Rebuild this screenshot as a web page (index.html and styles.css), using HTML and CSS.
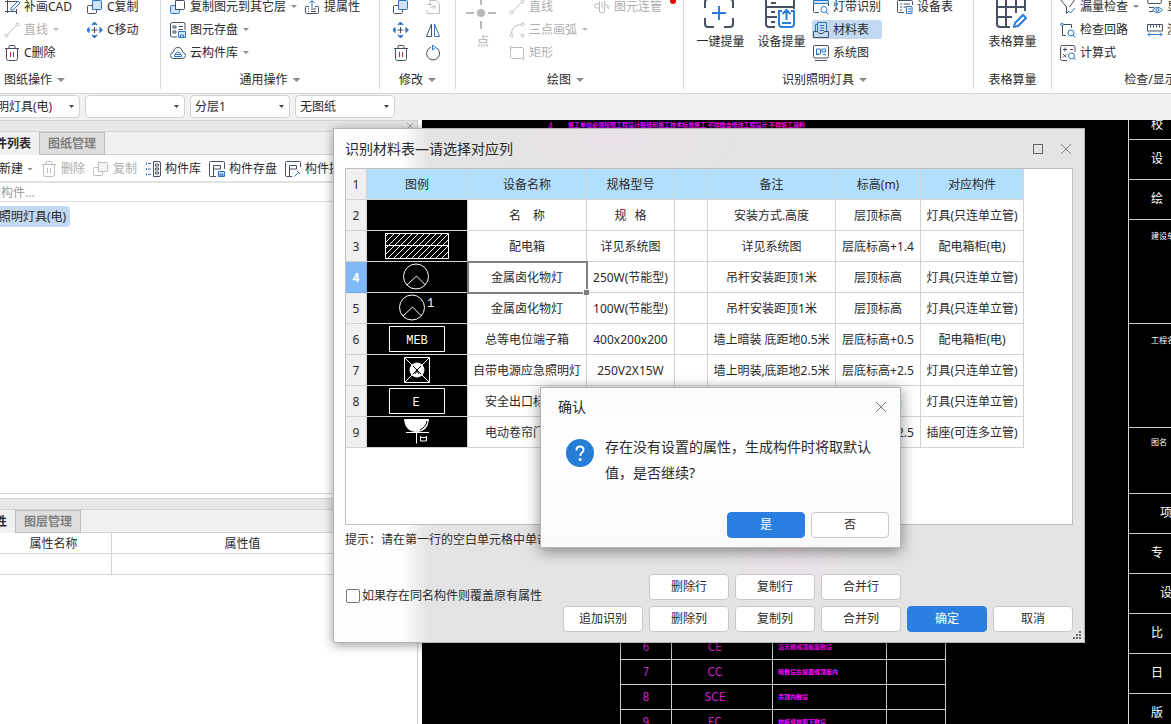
FILE: index.html
```html
<!DOCTYPE html>
<html lang="zh-CN">
<head>
<meta charset="utf-8">
<title>识别材料表</title>
<link rel="stylesheet" href="styles.css">
</head>
<body>
<svg class="defs" aria-hidden="true">
  <symbol id="i-draw" viewBox="0 0 16 16"><path class="d" d="M1 2.500h14M3.500 0v14M1 12.500h12M12.500 10v5"/><path class="b" d="M7 9l7-7 2 2-7 7H7z"/></symbol>
  <symbol id="i-line" viewBox="0 0 16 16"><path class="d" d="M3.500 12.500L12.500 3.500"/><circle class="d" cx="2.500" cy="13.500" r="1.500"/><circle class="d" cx="13.500" cy="2.500" r="1.500"/></symbol>
  <symbol id="i-trash" viewBox="0 0 16 16"><path class="d" d="M1 3.500h14M5 3.500V1.500q0-1 1-1h4q1 0 1 1v2M2.500 3.500v10q0 2 2 2h7q2 0 2-2v-10"/><path class="r" d="M6.500 7v5M9.500 7v5"/></symbol>
  <symbol id="i-copy" viewBox="0 0 16 16"><path class="bf" d="M5.500 1.500h8q1 0 1 1v7q0 1-1 1h-8z"/><path class="d" d="M5.500 6.500h-4q-1 0-1 1v6q0 1 1 1h7q1 0 1-1v-3"/></symbol>
  <symbol id="i-layers" viewBox="0 0 16 16"><path class="bf" d="M5.500 6.500h-4q-1 0-1 1v6q0 1 1 1h7q1 0 1-1v-3h-4z"/><path class="d" d="M5.500 1.500h8q1 0 1 1v7q0 1-1 1h-8z"/></symbol>
  <symbol id="i-move" viewBox="0 0 16 16"><path class="d" d="M7.500 5v6M4.500 8h6"/><path class="b" stroke-width="1.400" d="M5 3L7.500.500 10 3M5 13l2.500 2.500L10 13M2.500 5.500L0 8l2.500 2.500M12.500 5.500L15 8l-2.500 2.500M7.500 1v2M7.500 13v2M1 8h2M12 8h2"/></symbol>
  <symbol id="i-save" viewBox="0 0 16 16"><path class="d" d="M15 8V2q0-1.500-1.500-1.500h-11Q.5.500.5 2v11q0 2 2 2H7M3 4h3v2H3zM3 9h3v2H3zM8.500 4.500H13M8.500 7.500H13"/><path class="bf" d="M8.500 9.500h7v6h-7z"/><path class="b" d="M10.500 13h3v2.500h-3z"/></symbol>
  <symbol id="i-cloud" viewBox="0 0 16 16"><path class="d" d="M4 13.500Q.5 13.500.5 10.500T3.500 7Q4 2.500 8 2.500T12.500 7q3 .5 3 3.500t-3.500 3z"/><path class="b" d="M4.500 11.500q-.5-2 1-2.500Q6 7 8 7t2.500 2q1.500.5 1 2.500zM5 9.500h6"/></symbol>
  <symbol id="i-attr" viewBox="0 0 16 16"><path class="d" d="M5 7.500H2.500q-1 0-1 1v5q0 1 1 1h11q1 0 1-1v-5q0-1-1-1H11M4 10h1M7 10h5M4 12.500h1M7 12.500h5"/><path class="b" d="M8 9V2M5.500 4L8 1.500 10.500 4"/></symbol>
  <symbol id="i-paste" viewBox="0 0 16 16"><path class="d" d="M5 5V1.500h6L14.500 5v9.500h-4M2 5.500h5M2 14.500V11M5 8h5M8 5.500L10.500 8 8 10.500M2.500 14.500h7"/></symbol>
  <symbol id="i-mirror" viewBox="0 0 16 16"><path class="d" d="M6.500 2v12.500h-5z"/><path class="b" d="M9.500 2v12.500h5z"/></symbol>
  <symbol id="i-rotate" viewBox="0 0 16 16"><path class="d" d="M10.500 2.400A6.500 6.500 0 1 1 6 2.300"/><path class="b" d="M7.500 0l3 2.500-3 2.500z"/></symbol>
  <symbol id="i-arc" viewBox="0 0 16 16"><path class="d" d="M2.500 12Q2.500 3.500 12 2.500"/><circle class="d" cx="2.500" cy="13.500" r="1.500"/><circle class="d" cx="13.500" cy="2.500" r="1.500"/><circle class="d" cx="13.500" cy="13.500" r="1.500"/></symbol>
  <symbol id="i-rect" viewBox="0 0 16 16"><path class="d" d="M1.500 3.500v9q0 1 1 1H12M14.500 12V4q0-1.500-1.500-1.500H3"/><circle class="d" cx="2" cy="2.500" r="1"/><circle class="d" cx="14" cy="13.500" r="1"/></symbol>
  <symbol id="i-pipe" viewBox="0 0 16 16"><path class="d" d="M5.500 2v11q2.500 2 5 0V2M5.500 5H2.500q-2 0-2 2t2 2h3M10.500 6h2q2 0 2 2M12.500 7.500l2 2 1.500-2M8 3v6"/></symbol>
  <symbol id="i-strip" viewBox="0 0 16 16"><path class="d" d="M.5 12.500v-9M15.500 3.500V7M.5 12.500q0 1 1 1H6"/><path class="bf" d="M.5 1.500h15v3H.500z"/><circle class="b" cx="11" cy="10.500" r="3"/><path class="b" d="M13 13l2.500 2.500"/></symbol>
  <symbol id="i-mat" viewBox="0 0 16 16"><path class="b" d="M4.500 10V.500h9V10M7 3.500h4M7 6h4M7 8.500h4"/><path class="b" d="M4.500 2.500h-2V10"/><path class="d" d="M.5 9.500h4l1.500 2h4l1.500-2h4v6H.500z"/></symbol>
  <symbol id="i-sys" viewBox="0 0 16 16"><path class="d" d="M2 .500h12q1.500 0 1.500 1.500v9.500q0 1.500-1.500 1.500H2Q.5 13 .5 11.500V2Q.5.500 2 .500zM2 15.500h12"/><path class="b" d="M3.500 4h4v5h-4zM9 4h3.500v3H9zM10 9.500h3M3 9.500h3"/></symbol>
  <symbol id="i-list" viewBox="0 0 16 16"><path class="d" d="M15.500 6V2.500q0-1-1-1h-13q-1 0-1 1v10q0 1 1 1H7M3 5h2M6.500 5H13M3 8h2M6.500 8H9M3 11h2"/><path class="b" d="M9.500 7.500h5.500v7H9.500zM11 10h3M11 12.500h3"/></symbol>
  <symbol id="i-leak" viewBox="0 0 16 16"><path class="d" d="M1 1l5.500 7v6.500L9 12M14.500 1l-5 7"/><path class="b" d="M8 11.500l2.500 2.500 4.500-5"/></symbol>
  <symbol id="i-loop" viewBox="0 0 16 16"><path class="d" d="M2.500 3v10.500H6M2.500 2.500h9V6"/><circle class="bf" cx="2" cy="2.500" r="1.300"/><circle class="b" cx="11" cy="11" r="3"/><path class="b" d="M13 13l2.500 2.500"/></symbol>
  <symbol id="i-calc" viewBox="0 0 16 16"><path class="d" d="M7 15.500H2.500q-2 0-2-2V2.500q0-2 2-2h10.500q2 0 2 2V7M3 4.500h4M5 2.500v4M10 4.500h3M3 9l3.500 3.500M6.500 9L3 12.500"/><circle class="b" cx="11.500" cy="11" r="3"/><path class="b" d="M13.500 13l2 2"/></symbol>
  <symbol id="i-show" viewBox="0 0 16 16"><path class="d" d="M2 .500h11q1.500 0 1.500 2T13 4.500H2Q.5 4.500.5 2.500T2 .500zM7 8.500H2M6 12.500H2"/><path class="b" d="M5.500 11q5-5.500 10 0-5 5.500-10 0z"/><circle class="b" cx="10.500" cy="11" r="1.500"/></symbol>
  <symbol id="i-ruler" viewBox="0 0 16 16"><path class="d" d="M.5 2.500h15V9H.500zM3.500 2.500v3M6.500 2.500v3M9.500 2.500v3M12.500 2.500v3"/><path class="b" d="M1 12.500h14M3 10.500l-2 2 2 2M13 10.500l2 2-2 2"/></symbol>
  <symbol id="i-lib" viewBox="0 0 16 16"><path class="b" d="M3 2.500h3M3 8h3M3 13.500h3M1.500 1.500v2M1.500 7v2M1.500 12.500v2"/><path class="d" d="M8.500 .500h5.500q1.500 0 1.500 1.500v12q0 1.500-1.500 1.500H8.500zM10.500 3h3v2h-3zM10.500 7h3v2h-3zM10.500 11h3v2h-3z"/></symbol>
  <symbol id="i-cstore" viewBox="0 0 16 16"><path class="d" d="M15.500 8V1.500q0-1-1-1h-13q-1 0-1 1v13q0 1 1 1H7M4.500 15V4.500h7V8h-7"/><path class="bf" d="M9.500 10.500h6v5h-6z"/><path class="b" d="M11 13h3v2h-3z"/></symbol>
  <symbol id="i-cpick" viewBox="0 0 16 16"><path class="d" d="M15.500 6V1.500q0-1-1-1h-13q-1 0-1 1v13q0 1 1 1H7M4.500 15V4.500h7V8h-7M12 10l3 3"/><path class="b" d="M9.500 15.500l4-4"/></symbol>
  <symbol id="i-x" viewBox="0 0 12 12"><path d="M1 1l10 10M11 1L1 11"/></symbol>
</svg>

<header class="ribbon">
  <section class="group g-paper">
    <div class="tools">
      <div class="col">
        <button class="cmd"><svg><use href="#i-draw"/></svg>补画CAD</button>
        <button class="cmd off" disabled><svg><use href="#i-line"/></svg>直线<i class="caret"></i></button>
        <button class="cmd"><svg><use href="#i-trash"/></svg>C删除</button>
      </div>
      <div class="col">
        <button class="cmd"><svg><use href="#i-copy"/></svg>C复制</button>
        <button class="cmd"><svg><use href="#i-move"/></svg>C移动</button>
      </div>
    </div>
    <h2 class="cap">图纸操作<i class="caret wide"></i></h2>
  </section>
  <section class="group g-common">
    <div class="tools">
      <div class="col">
        <button class="cmd"><svg><use href="#i-layers"/></svg>复制图元到其它层<i class="caret"></i></button>
        <button class="cmd"><svg><use href="#i-save"/></svg>图元存盘<i class="caret"></i></button>
        <button class="cmd"><svg><use href="#i-cloud"/></svg>云构件库<i class="caret"></i></button>
      </div>
      <div class="col">
        <button class="cmd"><svg><use href="#i-attr"/></svg>提属性</button>
      </div>
    </div>
    <h2 class="cap">通用操作<i class="caret wide"></i></h2>
  </section>
  <section class="group g-edit">
    <div class="tools">
      <div class="col">
        <button class="cmd" aria-label="复制"><svg><use href="#i-copy"/></svg></button>
        <button class="cmd" aria-label="移动"><svg><use href="#i-move"/></svg></button>
        <button class="cmd" aria-label="删除"><svg><use href="#i-trash"/></svg></button>
      </div>
      <div class="col">
        <button class="cmd off" disabled aria-label="延伸"><svg><use href="#i-paste"/></svg></button>
        <button class="cmd" aria-label="镜像"><svg><use href="#i-mirror"/></svg></button>
        <button class="cmd" aria-label="旋转"><svg><use href="#i-rotate"/></svg></button>
      </div>
    </div>
    <h2 class="cap">修改<i class="caret wide"></i></h2>
  </section>
  <section class="group g-draw">
    <div class="tools">
      <button class="big off" disabled>
        <svg viewBox="0 0 32 32"><path d="M16 0v8M16 24v8M1 16h8M23 16h8" fill="none" stroke="#b8b8b8" stroke-width="2"/><circle cx="16" cy="16" r="4" fill="#b8b8b8"/></svg>点</button>
      <div class="col">
        <button class="cmd off" disabled><svg><use href="#i-line"/></svg>直线</button>
        <button class="cmd off" disabled><svg><use href="#i-arc"/></svg>三点画弧<i class="caret"></i></button>
        <button class="cmd off" disabled><svg><use href="#i-rect"/></svg>矩形</button>
      </div>
      <div class="col">
        <button class="cmd off marked" disabled><svg><use href="#i-pipe"/></svg>图元连管</button>
      </div>
    </div>
    <h2 class="cap">绘图<i class="caret wide"></i></h2>
  </section>
  <section class="group g-light">
    <div class="tools">
      <button class="big">
        <svg viewBox="0 0 32 32" fill="none" stroke-width="2"><path d="M2 11V5q0-3 3-3h6M21 2h6q3 0 3 3v6M30 21v6q0 3-3 3h-6M11 30H5q-3 0-3-3v-6" stroke="#475062"/><path d="M16 9v14M9 16h14" stroke="#2b7de0"/></svg>一键提量</button>
      <button class="big">
        <svg viewBox="0 0 32 32" fill="none" stroke-width="2"><path d="M11 30H5q-3 0-3-3V2h28v10M2 10h28M2 20h11M7 6h5M7 15h4M7 25h4" stroke="#475062"/><path d="M18 14h-3v13q0 3 3 3h9q3 0 3-3V14h-3M22.500 23V13M18.500 17l4-4 4 4M18 26h9" stroke="#2b7de0"/></svg>设备提量</button>
      <div class="col">
        <button class="cmd"><svg><use href="#i-strip"/></svg>灯带识别</button>
        <button class="cmd on"><svg><use href="#i-mat"/></svg>材料表</button>
        <button class="cmd"><svg><use href="#i-sys"/></svg>系统图</button>
      </div>
      <div class="col">
        <button class="cmd"><svg><use href="#i-list"/></svg>设备表</button>
      </div>
    </div>
    <h2 class="cap">识别照明灯具<i class="caret wide"></i></h2>
  </section>
  <section class="group g-sheet">
    <div class="tools">
      <button class="big">
        <svg viewBox="0 0 32 32" fill="none" stroke-width="2"><path d="M30 14V4q0-3-3-3H5Q2 1 2 4v23q0 3 3 3h10M2 10h28M2 20h15M11 1v29M21 1v15" stroke="#475062"/><path d="M19 30l1-4 8-8 3 3-8 8z" stroke="#2b7de0"/></svg>表格算量</button>
    </div>
    <h2 class="cap">表格算量</h2>
  </section>
  <section class="group g-check">
    <div class="tools">
      <div class="col">
        <button class="cmd"><svg><use href="#i-leak"/></svg>漏量检查<i class="caret"></i></button>
        <button class="cmd"><svg><use href="#i-loop"/></svg>检查回路</button>
        <button class="cmd"><svg><use href="#i-calc"/></svg>计算式</button>
      </div>
      <div class="col">
        <button class="cmd"><svg><use href="#i-show"/></svg>显示</button>
        <button class="cmd"><svg><use href="#i-ruler"/></svg>测量</button>
      </div>
    </div>
    <h2 class="cap">检查/显示<i class="caret wide"></i></h2>
  </section>
</header>

<nav class="combos">
  <span class="combo"><select aria-label="构件类型"><option>照明灯具(电)</option></select></span>
  <span class="combo"><select aria-label="构件"><option></option></select></span>
  <span class="combo"><select aria-label="分层"><option>分层1</option></select></span>
  <span class="combo"><select aria-label="图纸"><option>无图纸</option></select></span>
</nav>

<main class="work">
  <aside class="side">
    <div class="grip"><button class="shut" aria-label="关闭"><svg><use href="#i-x"/></svg></button></div>
    <div class="tabs"><button class="tab cur">构件列表</button><button class="tab">图纸管理</button></div>
    <div class="bar">
      <button class="tool">新建<i class="caret"></i></button>
      <button class="tool off" disabled><svg><use href="#i-trash"/></svg>删除</button>
      <button class="tool off" disabled><svg><use href="#i-copy"/></svg>复制</button>
      <button class="tool"><svg><use href="#i-lib"/></svg>构件库</button>
      <button class="tool"><svg><use href="#i-cstore"/></svg>构件存盘</button>
      <button class="tool"><svg><use href="#i-cpick"/></svg>构件提取</button>
    </div>
    <input class="search" type="text" aria-label="搜索构件" placeholder="搜索构件...">
    <div class="tree"><button class="node">照明灯具(电)</button></div>
    <div class="grip low"></div>
    <div class="tabs"><button class="tab cur">属性</button><button class="tab">图层管理</button></div>
    <div class="propbox">
      <table class="props">
        <thead><tr><th class="p-name">属性名称</th><th class="p-val">属性值</th></tr></thead>
        <tbody><tr><td></td><td></td></tr></tbody>
      </table>
    </div>
  </aside>
  <section class="cad">
    <p class="note"><span>4、</span><b>施工单位必须按照工程设计图纸和施工技术标准施工 不得擅自修改工程设计 不得偷工减料</b></p>
    <table class="codes">
      <tr><td class="c1">6</td><td class="c2">CE</td><td class="c3">沿天棚或顶板面敷设</td><td class="c4"></td></tr>
      <tr><td>7</td><td>CC</td><td class="c3">暗敷设在屋面或顶板内</td><td></td></tr>
      <tr><td>8</td><td>SCE</td><td class="c3">吊顶内敷设</td><td></td></tr>
      <tr><td>9</td><td>FC</td><td class="c3">地板或地面下敷设</td><td></td></tr>
    </table>
    <div class="stamp">
      <div class="s-top">校</div>
      <div>设</div>
      <div>绘</div>
      <div class="s-tall">建设单位</div>
      <div class="s-tall">工程名称</div>
      <div class="s-mid">图名</div>
      <div class="far">项</div>
      <div>专</div>
      <div class="far">设</div>
      <div>比</div>
      <div>日</div>
      <div>版</div>
    </div>
  </section>
</main>

<section class="dialog" role="dialog" aria-labelledby="dlg-title">
  <header class="dlg-head">
    <h1 id="dlg-title">识别材料表—请选择对应列</h1>
    <button class="maxi" aria-label="最大化"></button>
    <button class="shut" aria-label="关闭"><svg><use href="#i-x"/></svg></button>
  </header>
  <div class="sheet">
    <table class="mat">
      <colgroup><col class="k0"><col class="k1"><col class="k2"><col class="k3"><col class="k4"><col class="k5"><col class="k6"><col class="k7"></colgroup>
      <thead>
        <tr><th class="no">1</th><th>图例</th><th>设备名称</th><th>规格型号</th><th></th><th>备注</th><th>标高(m)</th><th>对应构件</th></tr>
      </thead>
      <tbody>
        <tr><th class="no">2</th><td class="lg"></td><td>名&emsp;称</td><td>规&ensp;&thinsp;格</td><td></td><td>安装方式.高度</td><td>层顶标高</td><td>灯具(只连单立管)</td></tr>
        <tr><th class="no">3</th><td class="lg"><svg viewBox="0 0 100 30"><defs><pattern id="hatch" width="6" height="6" patternUnits="userSpaceOnUse"><path d="M-1 7L7-1M-1 1l2-2M5 7l2-2" stroke="#fff"/></pattern></defs><path d="M18.500 2.500h63v25h-63z" fill="url(#hatch)"/><path d="M18.500 2.500h63v25h-63zM18.500 14.500h63"/></svg></td><td>配电箱</td><td>详见系统图</td><td></td><td>详见系统图</td><td>层底标高+1.4</td><td>配电箱柜(电)</td></tr>
        <tr><th class="no sel">4</th><td class="lg"><svg viewBox="0 0 100 30"><circle cx="49" cy="14.500" r="12.500"/><path d="M40 23l9.500-9 9 9"/></svg></td><td class="active">金属卤化物灯</td><td>250W(节能型)</td><td></td><td>吊杆安装距顶1米</td><td>层顶标高</td><td>灯具(只连单立管)</td></tr>
        <tr><th class="no">5</th><td class="lg"><svg viewBox="0 0 100 30"><circle cx="45" cy="14.500" r="12.500"/><path d="M36 23l9.500-9 9 9"/><text x="60" y="14">1</text></svg></td><td>金属卤化物灯</td><td>100W(节能型)</td><td></td><td>吊杆安装距顶1米</td><td>层顶标高</td><td>灯具(只连单立管)</td></tr>
        <tr><th class="no">6</th><td class="lg"><svg viewBox="0 0 100 30"><path d="M22.500 2.500h55v25h-55z"/><text x="50" y="20" text-anchor="middle">MEB</text></svg></td><td>总等电位端子箱</td><td>400x200x200</td><td></td><td>墙上暗装 底距地0.5米</td><td>层底标高+0.5</td><td>配电箱柜(电)</td></tr>
        <tr><th class="no">7</th><td class="lg"><svg viewBox="0 0 100 30"><path d="M37.500 2.500h25v25h-25zM38 3l24 24M62 3L38 27"/><circle cx="50" cy="15" r="7" fill="#fff"/><path d="M46 11l8 8M54 11l-8 8M48 19l2-3 2 3" stroke="#000"/></svg></td><td>自带电源应急照明灯</td><td>250V2X15W</td><td></td><td>墙上明装,底距地2.5米</td><td>层底标高+2.5</td><td>灯具(只连单立管)</td></tr>
        <tr><th class="no">8</th><td class="lg"><svg viewBox="0 0 100 30"><path d="M22.500 2.500h55v25h-55z"/><text x="49" y="20" text-anchor="middle">E</text></svg></td><td>安全出口标志灯</td><td></td><td></td><td></td><td>层顶标高</td><td>灯具(只连单立管)</td></tr>
        <tr><th class="no">9</th><td class="lg"><svg viewBox="0 0 100 30"><path d="M37.500 2.500h24q-1 12-12 12t-12-12z" fill="#fff"/><path d="M39 15.500h23M49.500 15.500v11M53.500 19v5h6v-5M53 20.500h7"/><path d="M53 13q6-3 7-9" stroke="#000"/></svg></td><td>电动卷帘门插座</td><td></td><td></td><td></td><td>层底标高+2.5</td><td>插座(可连多立管)</td></tr>
      </tbody>
    </table>
  </div>
  <p class="tip">提示：请在第一行的空白单元格中单击</p>
  <footer class="dlg-foot">
    <label class="check"><input type="checkbox">如果存在同名构件则覆盖原有属性</label>
    <div class="acts">
      <button class="btn second">删除行</button><button class="btn">复制行</button><button class="btn">合并行</button>
      <button class="btn first">追加识别</button><button class="btn">删除列</button><button class="btn">复制列</button><button class="btn">合并列</button><button class="btn main">确定</button><button class="btn">取消</button>
    </div>
  </footer>
  <svg class="sizer" viewBox="0 0 8 8"><path d="M6 0h2v2H6zM3 3h2v2H3zM6 3h2v2H6zM0 6h2v2H0zM3 6h2v2H3zM6 6h2v2H6z"/></svg>
</section>

<section class="confirm" role="alertdialog" aria-labelledby="cf-title">
  <header class="cf-head">
    <h2 id="cf-title">确认</h2>
    <button class="shut" aria-label="关闭"><svg><use href="#i-x"/></svg></button>
  </header>
  <div class="cf-body">
    <svg class="ask" viewBox="0 0 28 28"><circle cx="14" cy="14" r="14" fill="#267dd5"/><path d="M10.500 11.500Q10.500 7.500 14 7.500t3.500 3.500q0 1.500-1.500 2.500t-1.800 3.300" fill="none" stroke="#fff" stroke-width="2"/><circle cx="14.200" cy="20.500" r="1.500" fill="#fff"/></svg>
    <p>存在没有设置的属性，生成构件时将取默认值，是否继续?</p>
  </div>
  <footer class="cf-foot"><button class="btn main">是</button><button class="btn">否</button></footer>
</section>
</body>
</html>
```
FILE: styles.css
```css
* { box-sizing: border-box; }
html, body { height: 100%; overflow: hidden; }
body {
  margin: 0;
  position: relative;
  display: flex;
  flex-direction: column;
  background: #fff;
  color: #2a2a2a;
  font: 12px/18px "Noto Sans", "Noto Sans CJK SC", sans-serif;
}
button, input, select { font: inherit; color: inherit; }
button { border: 0; padding: 0; background: none; white-space: nowrap; }
h1, h2, p { margin: 0; font-weight: normal; }
table { border-spacing: 0; }
.defs { display: none; }

/* icon strokes */
.d { fill: none; stroke: var(--dark, #475062); }
.b { fill: none; stroke: var(--blue, #2b76c9); }
.bf { fill: var(--tint, #cfe3f8); stroke: var(--blue, #2b76c9); }
.r { fill: none; stroke: var(--red, #b03040); }
.off { --dark: #bcbcbc; --blue: #bcbcbc; --tint: #f3f3f3; --red: #bcbcbc; color: #adadad; }

/* ribbon */
.ribbon { display: flex; flex: none; margin-top: -3px; height: 96px; background: #fff; overflow: hidden; }
.group { flex: none; display: flex; flex-direction: column; gap: 9px; height: 92px; border-right: 1px solid #d9d9d9; }
.tools { display: flex; height: 65px; }
.col { display: flex; flex-direction: column; align-items: flex-start; gap: 4px; }
.cmd { display: flex; align-items: center; gap: 4px; height: 19px; padding: 0 1px; border-radius: 3px; }
.cmd svg, .tool svg { width: 16px; height: 16px; flex: none; overflow: visible; }
.cmd.on { background: #c2d9f1; width: 70px; }
.caret { flex: none; width: 6px; height: 3px; margin-left: 1px; background: #8a8a8a; clip-path: polygon(0 0, 100% 0, 50% 100%); }
.off .caret { background: #bcbcbc; }
.caret.wide { width: 8px; height: 4px; margin-left: 5px; }
.cap { display: flex; justify-content: center; align-items: center; padding-right: 8px; font-size: 12px; line-height: 18px; }
.big { display: flex; flex-direction: column; align-items: center; gap: 5px; width: 61px; line-height: 16px; }
.big svg { width: 32px; height: 32px; margin-right: 4px; }
.marked { position: relative; }
.marked::after { content: ""; position: absolute; right: -13px; top: 1px; width: 6px; height: 6px; border-radius: 50%; background: #f00000; }
.g-paper { width: 161px; padding-left: 3px; }
.g-paper .tools { gap: 13px; }
.g-paper .cap { justify-content: flex-start; padding-left: 1px; }
.g-common { width: 219px; padding-left: 8px; }
.g-common .tools { gap: 5px; }
.g-edit { width: 76px; padding-left: 12px; }
.g-edit .tools { gap: 14px; }
.g-edit .cap { padding-right: 12px; }
.g-draw { width: 228px; padding-left: 6px; }
.g-draw .tools { gap: 4px; }
.g-draw .cap { padding-right: 14px; }
.g-draw .big { width: 42px; }
.g-light { width: 290px; padding-left: 6px; }
.g-light .cap { padding-right: 14px; }
.g-light .col + .col { padding-left: 14px; }
.g-sheet { width: 78px; }
.g-sheet .tools { justify-content: center; }
.g-sheet .cap { padding-right: 0; }
.g-check { width: 220px; padding-left: 7px; }
.g-check .tools { gap: 6px; }
.g-check .cap { padding-right: 16px; }

/* combo row */
.combos { flex: none; display: flex; gap: 5px; height: 27px; padding-top: 1px; margin-left: -20px; background: #f1f1f1; border-top: 1px solid #d6d6d6; }
.combo { position: relative; width: 100px; height: 23px; }
.combo select { appearance: none; width: 100%; height: 100%; padding: 0 4px; border: 1px solid #d2d2d2; border-radius: 4px; background: #fff; }
.combo::after { content: ""; position: absolute; right: 6px; top: 10px; width: 5px; height: 3px; background: #444; clip-path: polygon(0 0, 100% 0, 50% 100%); }

/* workspace */
.work { flex: 1; min-height: 0; display: flex; gap: 4px; }
.side { flex: none; width: 418px; display: flex; flex-direction: column; border-right: 1px solid #d0d0d0; }
.grip { flex: none; display: flex; justify-content: flex-end; align-items: center; height: 12px; padding-right: 3px; background: #e8e8e8; border: solid #d4d4d4; border-width: 1px 0; }
.shut svg { display: block; width: 12px; height: 12px; fill: none; stroke: #808080; }
.grip .shut svg { width: 8px; height: 8px; }
.tabs { flex: none; display: flex; height: 23px; background: #f1f1f1; border-bottom: 1px solid #d2d2d2; }
.tab { height: 23px; padding: 1px 8px 0; background: #dedede; border: 1px solid #bdbdbd; font-weight: bold; color: #808080; }
.tab.cur { margin-left: -17px; padding-left: 0; border-width: 0 0 1px; border-color: #f1f1f1; background: #f1f1f1; color: #2a2a2a; }
.bar { flex: none; display: flex; align-items: center; gap: 8px; height: 28px; margin-left: -1px; padding-top: 2px; background: #fff; border-bottom: 2px solid #e2e2e2; overflow: hidden; }
.tool { flex: none; display: flex; align-items: center; gap: 4px; }
.tool .caret { margin-left: 0; }
.search { flex: none; width: 441px; height: 19px; margin-left: -23px; padding: 0; border: 0; border-bottom: 1px solid #dcdcdc; outline: 0; }
.search::placeholder { color: #9a9a9a; opacity: 1; }
.tree { flex: none; height: 292px; padding-top: 4px; border-bottom: 1px solid #d4d4d4; }
.node { height: 21px; width: 75px; margin-left: -5px; padding-left: 4px; text-align: left; border-radius: 4px; background: #c2d9f1; }
.grip.low { margin-top: 4px; }
.propbox { flex: 1; overflow: hidden; }
.props { table-layout: fixed; width: 378px; margin-left: -4px; }
.props th, .props td { height: 21px; padding: 2px 0 0; font-weight: normal; line-height: 18px; border: solid #d4d4d4; border-width: 0 1px 1px 0; }
.p-name { width: 116px; }

/* drawing canvas */
.cad { flex: 1; position: relative; overflow: hidden; background: #000; }
.note { position: absolute; left: 126px; top: 0; display: flex; gap: 6px; color: #f0f; font-size: 6px; line-height: 11px; white-space: nowrap; }
.note span { font-size: 8px; width: 14px; }
.codes { position: absolute; left: 198px; top: 515px; border-left: 1px solid #ccc; color: #cc22cc; }
.codes td { height: 25px; padding: 0; text-align: center; border: solid #ccc; border-width: 0 1px 1px 0; font-family: "DejaVu Sans Condensed", "Liberation Sans", "Noto Sans CJK SC", sans-serif; }
.codes .c1 { width: 51px; }
.codes .c2 { width: 101px; }
.codes td:nth-child(2) { padding-right: 14px; }
.codes .c3 { width: 114px; padding-left: 5px; text-align: left; font-size: 6px; font-weight: bold; color: #f0f; }
.codes .c4 { width: 59px; }
.stamp { position: absolute; right: 0; top: 0; width: 43px; border-left: 1px solid #ddd; color: #fff; }
.stamp div { height: 40px; padding-left: 22px; line-height: 38px; overflow: hidden; white-space: nowrap; border-bottom: 1px solid #ccc; }
.stamp .s-top { height: 20px; line-height: 10px; }
.stamp .s-tall { height: 104px; padding-left: 22px; line-height: 32px; font-size: 8px; }
.stamp .s-mid { height: 66px; line-height: 28px; font-size: 8px; }
.stamp .far { padding-left: 31px; }

/* material table window */
.dialog {
  position: absolute; left: 333px; top: 128px; width: 752px; padding: 0 11px 10px;
  border: 1px solid #b4b4b4;
  background:
    radial-gradient(ellipse 130px 50px at 280px 10px, #ebe2e9, transparent),
    radial-gradient(ellipse 70px 60px at 455px 430px, #ece2eb, transparent),
    linear-gradient(to right, #fdfdfd 68px, #e4e4e4 94px);
  box-shadow: 0 2px 10px rgba(0, 0, 0, .4);
}
.dlg-head { display: flex; align-items: center; height: 39px; padding-right: 1px; }
.dlg-head h1 { flex: 1; font-size: 14px; }
.maxi { width: 10px; height: 10px; margin-right: 17px; border: 1px solid #666; }
.sheet { height: 357px; background: #fff; border: 1px solid #bfbfbf; }
.mat { table-layout: fixed; width: 678px; }
.mat th, .mat td { height: 31px; padding: 2px 0 0; text-align: center; font-weight: normal; line-height: 18px; white-space: nowrap; border: solid #d2d2d2; border-width: 0 1px 1px 0; }
.mat thead th { background: #b3dfff; }
.mat .no, .mat thead .no { background: #f0f0f0; }
.mat .no.sel { background: #80b9f6; border-color: #6ea6e4; color: #fff; font-weight: bold; }
.mat .lg { padding: 0; background: #000; }
.lg svg { display: block; width: 100px; height: 30px; fill: none; stroke: #fff; }
.lg text { fill: #fff; stroke: none; font: 12px "Liberation Mono", monospace; }
.mat .active { position: relative; outline: 2px solid #7f7f7f; outline-offset: -1px; }
.active::after { content: ""; position: absolute; right: -3px; bottom: -3px; width: 5px; height: 5px; background: #7f7f7f; border: solid #fff; border-width: 1px 0 0 1px; }
.k0 { width: 21px; } .k1 { width: 101px; } .k2 { width: 119px; } .k3 { width: 88px; }
.k4 { width: 33px; } .k5 { width: 128px; } .k6 { width: 85px; } .k7 { width: 103px; }
.tip { height: 49px; line-height: 30px; }
.dlg-foot { display: flex; justify-content: space-between; align-items: flex-start; }
.check { display: flex; align-items: center; gap: 2px; padding: 13px 0 0 1px; }
.check input { appearance: none; width: 14px; height: 14px; margin: 0; border: 1px solid #777; border-radius: 2px; background: #fff; }
.acts { display: grid; grid-template-columns: repeat(6, 80px); gap: 6px; }
.btn { height: 26px; border: 1px solid #c8c8c8; border-radius: 4px; background: #fff; }
.btn.main { border-color: #2b7fe1; background: #2b7fe1; color: #fff; }
.btn.second { grid-column: 2; }
.btn.first { grid-column: 1; }
.sizer { position: absolute; right: 3px; bottom: 3px; width: 8px; height: 8px; fill: #707070; }

/* confirmation window */
.confirm {
  position: absolute; left: 540px; top: 387px; width: 361px; padding: 0 11px 9px 17px;
  border: 1px solid #b4b4b4; background: linear-gradient(#fbfbfb, #fefefe 60px, #fafafa);
  box-shadow: 0 3px 14px rgba(0, 0, 0, .45);
}
.cf-head { display: flex; justify-content: space-between; align-items: center; height: 38px; padding-right: 2px; }
.cf-head h2 { font-size: 14px; }
.cf-body { display: flex; gap: 11px; padding: 8px 12px 0 8px; height: 86px; font-size: 14px; line-height: 26px; }
.cf-body p { flex: 1; }
.ask { flex: none; width: 28px; height: 28px; margin-top: 5px; }
.cf-foot { display: grid; grid-template-columns: 78px 78px; justify-content: end; gap: 6px; }
```
